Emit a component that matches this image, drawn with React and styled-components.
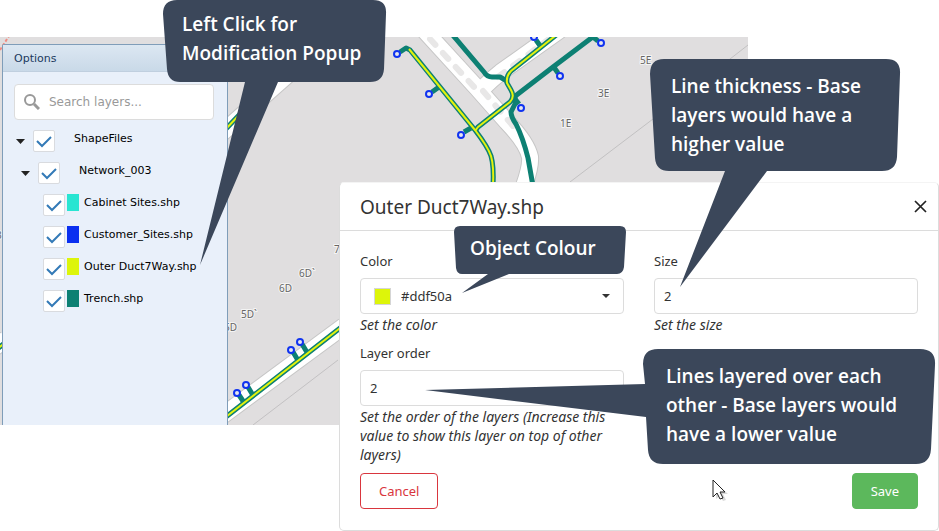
import React, { useState } from "react"
import styled, { createGlobalStyle } from "styled-components"

const GlobalStyle = createGlobalStyle`
  *, *::before, *::after {
    box-sizing: border-box;
  }
  body {
    margin: 0;
    background: #fff;
  }
`

const Page = styled.main`
  position: relative;
  min-height: 531px;
  padding-top: 37px;
  overflow: hidden;
`

const Workspace = styled.section`
  position: relative;
  margin-right: 191px;
  padding: 7px 0 0 2px;
  overflow: hidden;
  background: #e0dedf;
`

const MapCanvas = styled.svg`
  position: absolute;
  top: 0;
  left: 0;
  width: 748px;
  height: 388px;
`

const OptionsPanel = styled.aside`
  position: relative;
  width: 226px;
  min-height: 381px;
  border: 1px solid #7f9db9;
  border-bottom: 0;
  border-radius: 2px 2px 0 0;
  background: #e9f0fa;
  font-family: "DejaVu Sans", Verdana, sans-serif;
  font-size: 11px;
  color: #000;
`

const PanelTitle = styled.h2`
  margin: 0;
  padding: 2px 11px 0;
  border-bottom: 1px solid #c0cfdf;
  background: linear-gradient(#dce7f2, #c9d9e8);
  color: #1c3a5e;
  font-size: 11px;
  font-weight: 400;
  line-height: 24px;
`

const SearchBox = styled.label`
  display: flex;
  align-items: center;
  gap: 9px;
  height: 36px;
  margin: 12px 13px 10px 11px;
  padding: 0 9px;
  border: 1px solid #dcdcdc;
  border-radius: 4px;
  background: #fff;
`

const SearchInput = styled.input`
  flex: 1;
  min-width: 0;
  padding: 0;
  border: 0;
  outline: 0;
  background: none;
  font: 12px "DejaVu Sans", Verdana, sans-serif;

  &::placeholder {
    color: #999;
    opacity: 1;
  }
`

const Tree = styled.ul`
  margin: 0;
  padding: 0 0 0 11px;
  list-style: none;
`

const TreeRow = styled.li`
  display: flex;
  align-items: flex-start;
  height: 32px;
  padding-left: ${({ $level }) => $level * 5}px;
`

const Toggle = styled.button`
  display: grid;
  place-items: center;
  width: 13px;
  height: 22px;
  margin-right: 6px;
  padding: 0;
  border: 0;
  background: none;
`

const RowLabel = styled.label`
  display: flex;
  align-items: flex-start;
  line-height: 18px;
  white-space: nowrap;
`

const CheckHolder = styled.span`
  display: grid;
  place-items: center;
  width: 22px;
  height: 22px;
  margin-right: ${({ $wide }) => ($wide ? 19 : 2)}px;

  > * {
    grid-area: 1 / 1;
  }
  input:not(:checked) + svg {
    display: none;
  }
`

const CheckInput = styled.input`
  appearance: none;
  width: 22px;
  height: 22px;
  margin: 0;
  border: 1px solid #d9dbdf;
  border-radius: 2px;
  background: #fff;
`

const LayerSwatch = styled.span`
  width: 12px;
  height: 17px;
  margin-right: 5px;
  background: ${({ $color }) => $color};
`

const Dialog = styled.section`
  position: absolute;
  top: 182px;
  left: 339px;
  right: 0;
  border: 1px solid #dcdcdc;
  border-top-color: #f4f4f4;
  border-radius: 5px;
  background: #fff;
  color: #333;
  font-family: "Noto Sans", "Segoe UI", sans-serif;
  font-size: 13px;
`

const DialogHeader = styled.header`
  display: flex;
  align-items: center;
  justify-content: space-between;
  height: 48px;
  padding: 0 11px 0 20px;
  border-bottom: 1px solid #dcdcdc;
`

const DialogTitle = styled.h1`
  margin: 0;
  font-size: 19px;
  font-weight: 400;
`

const CloseButton = styled.button`
  display: grid;
  place-items: center;
  padding: 0;
  border: 0;
  background: none;
`

const Form = styled.form`
  padding: 20px 20px 21px;
`

const Fields = styled.div`
  display: grid;
  grid-template-columns: 1fr 1fr;
  gap: 9px 30px;
`

const Field = styled.div`
  display: flex;
  flex-direction: column;
`

const FieldLabel = styled.label`
  margin-bottom: 7px;
  line-height: 20px;
`

const TextInput = styled.input`
  width: 100%;
  height: 36px;
  padding: 0 9px;
  border: 1px solid #dcdcdc;
  border-radius: 4px;
  background: #fff;
  color: #333;
  font: inherit;
`

const SelectHolder = styled.div`
  display: grid;
  grid-template-columns: auto 1fr auto;
  align-items: center;

  > * {
    grid-row: 1;
  }
  > svg {
    grid-column: 3;
    margin-right: 14px;
    pointer-events: none;
  }
`

const ColorSelect = styled.select`
  grid-column: 1 / -1;
  width: 100%;
  height: 36px;
  padding: 0 40px;
  appearance: none;
  border: 1px solid #dcdcdc;
  border-radius: 4px;
  background: #fff;
  color: #333;
  font: inherit;
`

const ColorSwatch = styled.span`
  grid-column: 1;
  z-index: 1;
  width: 17px;
  height: 17px;
  margin-left: 14px;
  border: 1px solid #d5d5d5;
  background: #ddf50a;
  pointer-events: none;
`

const Help = styled.p`
  margin: 1px 0 0;
  font-size: 14px;
  font-style: italic;
  line-height: 19px;
`

const Actions = styled.footer`
  display: flex;
  justify-content: space-between;
  margin-top: 9px;
`

const ActionButton = styled.button`
  height: 36px;
  padding: 0 18px;
  border: 1px solid ${({ $primary }) => ($primary ? "#5cb85c" : "#d9363e")};
  border-radius: 4px;
  background: ${({ $primary }) => ($primary ? "#5cb85c" : "#fff")};
  color: ${({ $primary }) => ($primary ? "#fff" : "#d9363e")};
  font: inherit;
`

const CalloutBox = styled.div`
  position: absolute;
  top: ${({ $top }) => $top}px;
  left: ${({ $left }) => $left}px;
  width: ${({ $width }) => $width}px;
  height: ${({ $height }) => $height}px;
  padding: ${({ $pad }) => $pad};
  pointer-events: none;
`

const CalloutShape = styled.svg`
  position: absolute;
  top: 0;
  left: 0;
  overflow: visible;
  fill: #3b475a;
`

const CalloutText = styled.p`
  position: relative;
  margin: 0;
  color: #fff;
  font-family: "Trebuchet MS", "Open Sans", sans-serif;
  font-size: 19px;
  font-weight: 600;
  line-height: 29px;
  white-space: nowrap;
`

const Pointer = styled.svg`
  position: absolute;
  top: 479px;
  left: 712px;
`

const layers = [
  { name: "ShapeFiles", level: 0, group: true },
  { name: "Network_003", level: 1, group: true },
  { name: "Cabinet Sites.shp", level: 2, color: "#28e5d2" },
  { name: "Customer_Sites.shp", level: 2, color: "#0a2ff0" },
  { name: "Outer Duct7Way.shp", level: 2, color: "#ddf50a" },
  { name: "Trench.shp", level: 2, color: "#0d8073" },
]

const callouts = [
  {
    top: 0, left: 163, width: 224, height: 82, pad: "10px 19px",
    lines: ["Left Click for", "Modification Popup"],
    shape: "M14 0H210Q224 0 223 14L221 69Q220 82 207 82H115L37 265L82 82H17Q5 82 4 69L0 14Q0 0 14 0Z",
  },
  {
    top: 59, left: 650, width: 251, height: 112, pad: "13px 21px",
    lines: ["Line thickness - Base", "layers would have a", "higher value"],
    shape: "M14 0H236Q251 0 250 15L247 98Q246 112 232 112H117L30 228L75 112H19Q6 112 5 99L0 15Q0 0 14 0Z",
  },
  {
    top: 226, left: 454, width: 172, height: 48, pad: "8px 16px",
    lines: ["Object Colour"],
    shape: "M6 0H166Q172 0 172 6L170 41Q169 48 163 48H55L8 67L34 48H8Q3 48 2 42L0 6Q0 0 6 0Z",
  },
  {
    top: 349, left: 643, width: 293, height: 115, pad: "13px 23px",
    lines: ["Lines layered over each", "other - Base layers would", "have a lower value"],
    shape: "M15 0H277Q293 0 292 16L288 100Q287 115 273 115H20Q6 115 5 101L3 68L-218 41L2 35L0 15Q0 0 15 0Z",
  },
]

const sites = [
  [397, 54], [429, 94], [461, 135], [521, 108], [560, 76], [601, 43], [534, 37],
  [237, 393], [246, 385], [291, 350], [300, 342],
]

const plots = [
  ["5E", 640, 64], ["3E", 598, 97], ["1E", 560, 127], ["7", 334, 253],
  ["6D`", 299, 277], ["6D", 279, 292], ["5D`", 241, 318], ["5D", 224, 331], ["3", -4, 239],
]

const Caret = () => (
  <svg width="9" height="5" viewBox="0 0 9 5" aria-hidden="true">
    <path d="M0 0H9L4.500 5Z" fill="#222" />
  </svg>
)

const roads = [
  "M424 30L477 88L507 122Q527 143 530 157Q531 166 524 186",
  "M484 87Q491 80 501 72L560 30",
  "M222 416L344 326",
  "M222 133L292 71",
  "M-6 348L6 339",
]

const NetworkMap = () => (
  <MapCanvas viewBox="0 37 748 388" role="img" aria-label="Network map">
    <g fill="none">
      <path d="M570 182L653 119L748 45M253 425L338 360" stroke="#c2c1c2" />
      <path d="M0 50L9 36" stroke="#f08a80" strokeWidth="2" strokeDasharray="3 2" />
      <g stroke="#c6c6c6" strokeWidth="18">
        {roads.map(d => <path key={d} d={d} />)}
      </g>
      <g stroke="#fff" strokeWidth="16">
        {roads.map(d => <path key={d} d={d} />)}
      </g>
      <path
        d="M430 39L475 88M483 91L513 126M498 77L549 39"
        stroke="#e8e7e7"
        strokeWidth="6"
        strokeLinecap="round"
        strokeDasharray="8 11"
      />
      <g stroke="#0d8073" strokeWidth="5" strokeLinejoin="round">
        <path d="M400 52L406 48L410 50L475 130Q488 147 491 156Q494 166 493 186" />
        <path d="M475 131L478 127L510 102Q515 97 511 90L507 83Q506 76 511 71L560 32" />
        <path d="M451 33L484 72Q487 77 492 77H500L507 81" />
        <path d="M514 97L553 67L598 33" />
        <path d="M515 97V104L511 112Q511 117 516 124Q523 138 528 158L533 186" />
        <path d="M432 92L439 87M464 132L471 128M558 73L553 66M598 41L592 36M519 104L515 99M536 40L541 47" />
        <path d="M239 395L245 404M248 387L254 397M293 352L299 362M302 344L308 354" />
        <path d="M222 420L344 325M222 133L242 112M-4 350L6 342" />
      </g>
      <g stroke="#e3f30c" strokeWidth="2" strokeLinejoin="round">
        <path d="M409 49L475 130Q488 147 491 156Q494 166 493 186" />
        <path d="M475 131L478 127L510 102Q515 97 511 90L507 83Q506 76 511 71L560 32" />
        <path d="M222 420L344 325M222 133L242 112M-4 350L6 342" />
      </g>
      <g stroke="#1033f0" strokeWidth="2">
        {sites.map(([x, y]) => <circle key={`${x}-${y}`} cx={x} cy={y} r="3" fill="#e6e6ec" />)}
      </g>
    </g>
    <g
      fill="#666"
      stroke="#f4f4f4"
      strokeWidth="2"
      paintOrder="stroke"
      fontFamily='"Noto Sans", sans-serif'
      fontSize="10"
    >
      {plots.map(([name, x, y]) => <text key={`${name}-${x}`} x={x} y={y}>{name}</text>)}
    </g>
  </MapCanvas>
)

const LayerRow = ({ name, level, color, group }) => (
  <TreeRow $level={level}>
    <Toggle type="button" aria-label={`Toggle ${name}`} style={{ visibility: group ? "visible" : "hidden" }}>
      <Caret />
    </Toggle>
    <RowLabel>
      <CheckHolder $wide={group}>
        <CheckInput type="checkbox" defaultChecked />
        <svg width="16" height="14" viewBox="0 0 16 14" aria-hidden="true">
          <path d="M1 7L6 12L15 3" fill="none" stroke="#337ab7" strokeWidth="2" />
        </svg>
      </CheckHolder>
      {color && <LayerSwatch $color={color} />}
      {name}
    </RowLabel>
  </TreeRow>
)

const LayerPanel = () => (
  <OptionsPanel>
    <PanelTitle>Options</PanelTitle>
    <SearchBox>
      <svg width="16" height="16" viewBox="0 0 16 16" fill="none" stroke="#999" aria-hidden="true">
        <circle cx="6" cy="6" r="5" strokeWidth="2" />
        <path d="M10 10L15 15" strokeWidth="3" />
      </svg>
      <SearchInput type="text" placeholder="Search layers..." aria-label="Search layers" />
    </SearchBox>
    <Tree>
      {layers.map(layer => <LayerRow key={layer.name} {...layer} />)}
    </Tree>
  </OptionsPanel>
)

const LayerDialog = () => {
  const [size, setSize] = useState("2")
  const [order, setOrder] = useState("2")

  return (
    <Dialog role="dialog" aria-labelledby="dialog-title">
      <DialogHeader>
        <DialogTitle id="dialog-title">Outer Duct7Way.shp</DialogTitle>
        <CloseButton type="button" aria-label="Close">
          <svg width="13" height="13" viewBox="0 0 13 13" aria-hidden="true">
            <path d="M1 1L12 12M12 1L1 12" stroke="#222" strokeWidth="1.7" />
          </svg>
        </CloseButton>
      </DialogHeader>
      <Form onSubmit={e => e.preventDefault()}>
        <Fields>
          <Field>
            <FieldLabel htmlFor="color">Color</FieldLabel>
            <SelectHolder>
              <ColorSelect id="color">
                <option>#ddf50a</option>
              </ColorSelect>
              <ColorSwatch />
              <svg width="8" height="4" viewBox="0 0 8 4" aria-hidden="true">
                <path d="M0 0H8L4 4Z" fill="#333" />
              </svg>
            </SelectHolder>
            <Help>Set the color</Help>
          </Field>
          <Field>
            <FieldLabel htmlFor="size">Size</FieldLabel>
            <TextInput id="size" value={size} onChange={e => setSize(e.target.value)} />
            <Help>Set the size</Help>
          </Field>
          <Field>
            <FieldLabel htmlFor="order">Layer order</FieldLabel>
            <TextInput id="order" value={order} onChange={e => setOrder(e.target.value)} />
            <Help>
              Set the order of the layers (Increase this value to show this layer on top of other layers)
            </Help>
          </Field>
        </Fields>
        <Actions>
          <ActionButton type="button">Cancel</ActionButton>
          <ActionButton type="submit" $primary>Save</ActionButton>
        </Actions>
      </Form>
    </Dialog>
  )
}

const Callout = ({ top, left, width, height, pad, lines, shape }) => (
  <CalloutBox $top={top} $left={left} $width={width} $height={height} $pad={pad}>
    <CalloutShape width={width} height={height} aria-hidden="true">
      <path d={shape} />
    </CalloutShape>
    {lines.map(line => <CalloutText key={line}>{line}</CalloutText>)}
  </CalloutBox>
)

const App = () => (
  <Page>
    <GlobalStyle />
    <Workspace>
      <NetworkMap />
      <LayerPanel />
    </Workspace>
    <LayerDialog />
    {callouts.map(callout => <Callout key={callout.left} {...callout} />)}
    <Pointer width="18" height="24" viewBox="0 0 18 24" aria-hidden="true">
      <path d="M4 4V20L8 17L11 22L14 21L11 15H16Z" fill="#000" opacity="0.15" />
      <path d="M1 1V18L5 14L8 20L11 19L8 13H13Z" fill="#fff" stroke="#222" />
    </Pointer>
  </Page>
)

export default App
